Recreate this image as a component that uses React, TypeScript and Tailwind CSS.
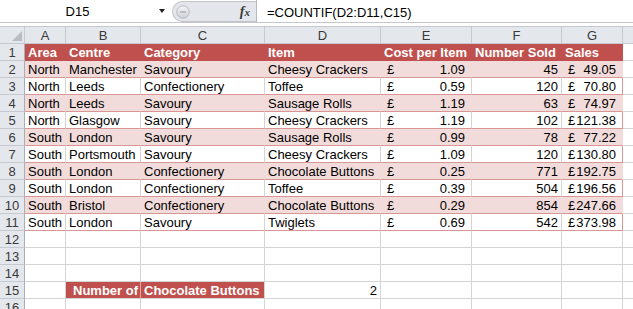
import React from 'react'

const colW = ['w-[41px]', 'w-[75px]', 'w-[124px]', 'w-[116px]', 'w-[91px]', 'w-[90px]', 'w-[61px]']
const letters = ['A', 'B', 'C', 'D', 'E', 'F', 'G']

const headers = ['Area', 'Centre', 'Category', 'Item', 'Cost per Item', 'Number Sold', 'Sales']

const rows = [
  ['North', 'Manchester', 'Savoury', 'Cheesy Crackers', '1.09', '45', '49.05'],
  ['North', 'Leeds', 'Confectionery', 'Toffee', '0.59', '120', '70.80'],
  ['North', 'Leeds', 'Savoury', 'Sausage Rolls', '1.19', '63', '74.97'],
  ['North', 'Glasgow', 'Savoury', 'Cheesy Crackers', '1.19', '102', '121.38'],
  ['South', 'London', 'Savoury', 'Sausage Rolls', '0.99', '78', '77.22'],
  ['South', 'Portsmouth', 'Savoury', 'Cheesy Crackers', '1.09', '120', '130.80'],
  ['South', 'London', 'Confectionery', 'Chocolate Buttons', '0.25', '771', '192.75'],
  ['South', 'London', 'Confectionery', 'Toffee', '0.39', '504', '196.56'],
  ['South', 'Bristol', 'Confectionery', 'Chocolate Buttons', '0.29', '854', '247.66'],
  ['South', 'London', 'Savoury', 'Twiglets', '0.69', '542', '373.98'],
]

function RowHead({ n }: { n: number }) {
  return (
    <div className="w-[25px] shrink-0 h-[17px] bg-[#e4e7ec] border-r border-b border-r-[#a9aeb5] border-b-[#c6cad0] text-center text-[#3a3a3a] pt-[2px] leading-[14px]">
      {n}
    </div>
  )
}

function FormulaBar() {
  return (
    <div className="h-[23px] flex bg-white border-b border-[#c4c8ce]">
      <div className="w-[172px] shrink-0 flex items-center">
        <div className="w-[155px] text-center pt-[1px]">D15</div>
        <div className="ml-[4px] w-0 h-0 border-l-[3px] border-r-[3px] border-t-[4px] border-l-transparent border-r-transparent border-t-[#222]" />
      </div>
      <div className="w-[84px] shrink-0 mt-[1px] h-[21px] rounded-l-[11px] bg-[#e3e6ea] border border-r-0 border-[#c1c5cb] flex items-center">
        <svg width="16" height="14" viewBox="0 0 16 14" className="ml-[2px]">
          <defs>
            <linearGradient id="knob" x1="0" y1="0" x2="0" y2="1">
              <stop offset="0" stopColor="#f4f5f7" />
              <stop offset="1" stopColor="#cdd1d6" />
            </linearGradient>
          </defs>
          <circle cx="8" cy="7" r="6.2" fill="url(#knob)" stroke="#b5bac1" strokeWidth="1" />
          <rect x="5" y="6.3" width="6" height="1.4" fill="#a9aeb5" />
        </svg>
        <span className="ml-auto mr-[6px] font-['Liberation_Serif',serif] italic font-bold text-[14px] text-[#3a3a3a] leading-none">
          f<span className="text-[11px]">x</span>
        </span>
      </div>
      <div className="flex-1 border-l border-[#b5bac1] pl-[10px] pt-[3px]">=COUNTIF(D2:D11,C15)</div>
    </div>
  )
}

function ColHeader() {
  return (
    <div className="flex h-[17px]">
      <div className="w-[25px] shrink-0 bg-[#e4e7ec] border-r border-b border-[#c6cad0] relative">
        <div className="absolute right-[3px] bottom-[3px] w-0 h-0 border-l-[9px] border-t-[9px] border-l-transparent border-t-transparent border-b-0 border-r-0"
          style={{ borderRightWidth: 0 }} />
        <svg width="10" height="10" viewBox="0 0 10 10" className="absolute right-[2px] bottom-[2px]">
          <polygon points="10,0 10,10 0,10" fill="#b9bec4" />
        </svg>
      </div>
      {letters.map((l, i) => (
        <div key={l} className={`${colW[i]} shrink-0 bg-[#e4e7ec] border-r border-b border-[#c6cad0] text-center text-[#3a3a3a] pt-[2px] leading-[14px]`}>
          {l}
        </div>
      ))}
      <div className="flex-1 bg-[#e4e7ec] border-b border-[#c6cad0]" />
    </div>
  )
}

function Money({ v }: { v: string }) {
  return (
    <div className="flex justify-between pl-[6px] pr-[6px]">
      <span>£</span>
      <span>{v}</span>
    </div>
  )
}

function TableRow({ n, cells, pink }: { n: number; cells: string[]; pink: boolean }) {
  const base = pink
    ? 'bg-[#f2dcdb] border-b-[#da9694] border-r-[#f2dcdb]'
    : 'bg-white border-b-[#da9694] border-r-[#d4d4d4]'
  return (
    <div className="flex h-[17px]">
      <RowHead n={n} />
      {cells.map((c, i) => {
        const last = i === 6
        const cls = `${colW[i]} shrink-0 border-r border-b ${base} ${last ? 'border-r-[#da9694]' : ''} pt-[2px] leading-[14px] whitespace-nowrap overflow-hidden`
        if (i === 4 || i === 6) {
          return (
            <div key={i} className={cls}>
              <Money v={c} />
            </div>
          )
        }
        return (
          <div key={i} className={`${cls} ${i === 5 ? 'text-right pr-[3px]' : 'pl-[3px]'}`}>
            {c}
          </div>
        )
      })}
      <div className="flex-1 border-b border-[#d4d4d4]" />
    </div>
  )
}

function EmptyRow({ n, children }: { n: number; children?: React.ReactNode }) {
  return (
    <div className="flex h-[17px]">
      <RowHead n={n} />
      {children ??
        colW.map((w, i) => <div key={i} className={`${w} shrink-0 border-r border-b border-[#d4d4d4]`} />)}
      <div className="flex-1 border-b border-[#d4d4d4]" />
    </div>
  )
}

export default function App() {
  return (
    <div className="w-[633px] h-[309px] overflow-hidden bg-white text-[13px] text-black font-['Liberation_Sans',Arial,sans-serif]">
      <FormulaBar />
      <div className="h-[4px] bg-white border-b border-[#c4c8ce]" />
      <ColHeader />

      {/* header row */}
      <div className="flex h-[17px]">
        <RowHead n={1} />
        {headers.map((h, i) => (
          <div
            key={h}
            className={`${colW[i]} shrink-0 bg-[#c0504d] border-r border-b border-[#c0504d] text-white font-bold pl-[3px] pt-[2px] leading-[14px] whitespace-nowrap`}
          >
            {h}
          </div>
        ))}
        <div className="flex-1 border-b border-[#d4d4d4]" />
      </div>

      {rows.map((r, i) => (
        <TableRow key={i} n={i + 2} cells={r} pink={i % 2 === 0} />
      ))}

      <EmptyRow n={12} />
      <EmptyRow n={13} />
      <EmptyRow n={14} />
      <EmptyRow n={15}>
        <div className="w-[41px] shrink-0 border-r border-b border-[#d4d4d4]" />
        <div className="w-[75px] shrink-0 bg-[#c0504d] border-r border-b border-r-[#e2a9a7] border-b-[#d4d4d4] text-white font-bold text-right pr-[2px] pt-[2px] leading-[14px] whitespace-nowrap">
          Number of
        </div>
        <div className="w-[124px] shrink-0 bg-[#c0504d] border-r border-b border-[#d4d4d4] text-white font-bold pl-[3px] pt-[2px] leading-[14px] whitespace-nowrap">
          Chocolate Buttons
        </div>
        <div className="w-[116px] shrink-0 border-r border-b border-[#d4d4d4] text-right pr-[3px] pt-[2px] leading-[14px]">2</div>
        <div className="w-[91px] shrink-0 border-r border-b border-[#d4d4d4]" />
        <div className="w-[90px] shrink-0 border-r border-b border-[#d4d4d4]" />
        <div className="w-[61px] shrink-0 border-r border-b border-[#d4d4d4]" />
      </EmptyRow>
      <EmptyRow n={16} />
    </div>
  )
}
